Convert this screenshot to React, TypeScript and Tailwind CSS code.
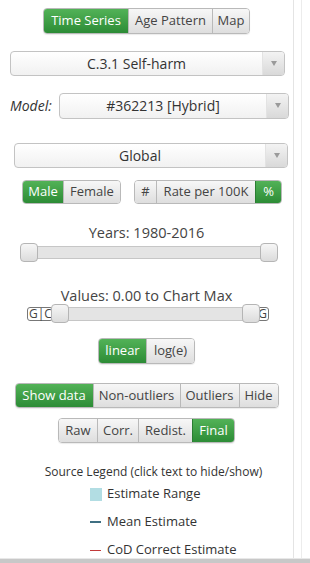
import type { ReactNode } from 'react'

const GREEN = 'bg-gradient-to-b from-[#52b257] to-[#2c8c36] text-white border-[#2a7d32]'
const GRAY = 'bg-gradient-to-b from-[#f7f7f7] to-[#dedede] text-[#444] border-[#b9b9b9]'

type Seg = { label: string; on?: boolean; w: number }

function Group({ items, h = 24 }: { items: Seg[]; h?: number }) {
  return (
    <div className="flex justify-center">
      <div className="flex rounded-[4px] overflow-hidden border border-[#b9b9b9] shadow-[0_1px_1px_rgba(0,0,0,0.08)]">
        {items.map((it, i) => (
          <div
            key={it.label}
            style={{ width: it.w, height: h }}
            className={`flex items-center justify-center text-[13px] ${it.on ? GREEN : GRAY} ${i > 0 ? 'border-l' : ''}`}
          >
            {it.label}
          </div>
        ))}
      </div>
    </div>
  )
}

function Select({ children, className }: { children: ReactNode; className: string }) {
  return (
    <div className={`flex rounded-[4px] border border-[#c3c3c3] overflow-hidden bg-gradient-to-b from-white to-[#f1f1f1] ${className}`}>
      <div className="flex-1 flex items-center justify-center text-[14px] text-[#333]">{children}</div>
      <div className="w-[22px] flex items-center justify-center bg-gradient-to-b from-[#f3f3f3] to-[#d9d9d9] border-l border-[#e3e3e3]">
        <span className="block w-0 h-0 border-l-[3px] border-r-[3px] border-t-[5px] border-l-transparent border-r-transparent border-t-[#9a9a9a]" />
      </div>
    </div>
  )
}

function Handle({ className }: { className: string }) {
  return (
    <div className={`absolute w-[18px] h-[19px] rounded-[4px] border border-[#b5b5b5] bg-gradient-to-b from-[#f6f6f6] to-[#dcdcdc] ${className}`} />
  )
}

export default function App() {
  return (
    <div className="relative w-[310px] h-[563px] bg-white overflow-hidden" style={{ fontFamily: '"Open Sans", "Liberation Sans", sans-serif' }}>
      <div className="w-[294px] h-[558px] border-r border-[#e4e4e4] flex flex-col">
        <div className="mt-[8px]">
          <Group items={[{ label: 'Time Series', on: true, w: 84 }, { label: 'Age Pattern', w: 84 }, { label: 'Map', w: 37 }]} />
        </div>

        <Select className="mt-[17px] ml-[10px] w-[275px] h-[26px]">C.3.1 Self-harm</Select>

        <div className="mt-[17px] flex items-center">
          <span className="ml-[10px] w-[49px] italic text-[14px] text-[#333]">Model:</span>
          <Select className="w-[230px] h-[26px]">#362213 [Hybrid]</Select>
        </div>

        <Select className="mt-[24px] ml-[14px] w-[274px] h-[26px]">Global</Select>

        <div className="mt-[12px] flex items-center">
          <div className="ml-[22px] flex rounded-[4px] overflow-hidden border border-[#b9b9b9]">
            <div className={`w-[40px] h-[22px] flex items-center justify-center text-[13px] ${GREEN}`}>Male</div>
            <div className={`w-[57px] h-[22px] flex items-center justify-center text-[13px] border-l ${GRAY}`}>Female</div>
          </div>
          <div className="ml-[13px] flex rounded-[4px] overflow-hidden border border-[#b9b9b9]">
            <div className={`w-[21px] h-[22px] flex items-center justify-center text-[13px] ${GRAY}`}>#</div>
            <div className={`w-[99px] h-[22px] flex items-center justify-center text-[13px] border-l ${GRAY}`}>Rate per 100K</div>
            <div className={`w-[26px] h-[22px] flex items-center justify-center text-[13px] border-l ${GREEN}`}>%</div>
          </div>
        </div>

        <div className="mt-[20px] text-center text-[14.5px] leading-[18px] text-[#444]">Years: 1980-2016</div>
        <div className="relative mt-[1px] ml-[20px] w-[258px] h-[19px]">
          <div className="absolute left-[2px] right-[2px] top-[3px] h-[13px] bg-[#e4e4e4] border border-[#c6c6c6] rounded-[3px]" />
          <Handle className="left-0 top-0" />
          <Handle className="right-0 top-0" />
        </div>

        <div className="mt-[26px] text-center text-[14.5px] leading-[18px] text-[#444]">Values: 0.00 to Chart Max</div>
        <div className="relative mt-[-1px] ml-[27px] w-[242px] h-[19px]">
          <div className="absolute left-0 top-[3px] w-[26px] h-[14px] pl-[1px] flex items-center border border-[#777] rounded-[3px] text-[12px] leading-[12px] text-[#444] bg-white">G|C</div>
          <div className="absolute right-0 top-[3px] w-[18px] h-[14px] flex items-center justify-end pr-[1px] border border-[#777] rounded-[3px] text-[12px] leading-[12px] text-[#444] bg-white">G</div>
          <div className="absolute left-[26px] right-[16px] top-[3px] h-[14px] bg-[#e4e4e4] border border-[#c6c6c6]" />
          <Handle className="left-[24px] top-0" />
          <Handle className="left-[215px] top-0" />
        </div>

        <div className="mt-[16px]">
          <Group items={[{ label: 'linear', on: true, w: 47 }, { label: 'log(e)', w: 48 }]} />
        </div>

        <div className="mt-[19px]">
          <Group h={23} items={[{ label: 'Show data', on: true, w: 77 }, { label: 'Non-outliers', w: 87 }, { label: 'Outliers', w: 59 }, { label: 'Hide', w: 39 }]} />
        </div>

        <div className="mt-[10px]">
          <Group h={23} items={[{ label: 'Raw', w: 38 }, { label: 'Corr.', w: 41 }, { label: 'Redist.', w: 54 }, { label: 'Final', on: true, w: 42 }]} />
        </div>

        <div className="mt-[21px] text-center text-[12px] leading-[15px] text-[#333] pl-[14px]">Source Legend (click text to hide/show)</div>

        <div className="ml-[90px] mt-[7px] flex items-center h-[16px] text-[13px] text-[#333]">
          <span className="w-[12px] h-[13px] bg-[#b2dde3] mr-[5px]" />
          Estimate Range
        </div>
        <div className="ml-[90px] mt-[12px] flex items-center h-[16px] text-[13px] text-[#333]">
          <span className="w-[11px] h-[2px] bg-[#3f6f82] mr-[6px]" />
          Mean Estimate
        </div>
        <div className="ml-[90px] mt-[12px] flex items-center h-[16px] text-[13px] text-[#333]">
          <span className="w-[11px] h-[1px] bg-[#c23a3a] mr-[6px]" />
          CoD Correct Estimate
        </div>
      </div>
      <div className="absolute left-[301px] top-0 h-[558px] w-px bg-[#ececec]" />
      <div className="absolute left-0 bottom-0 w-full h-[5px] bg-[#c8c8c8] border-t border-[#e8e8e8]" />
    </div>
  )
}
